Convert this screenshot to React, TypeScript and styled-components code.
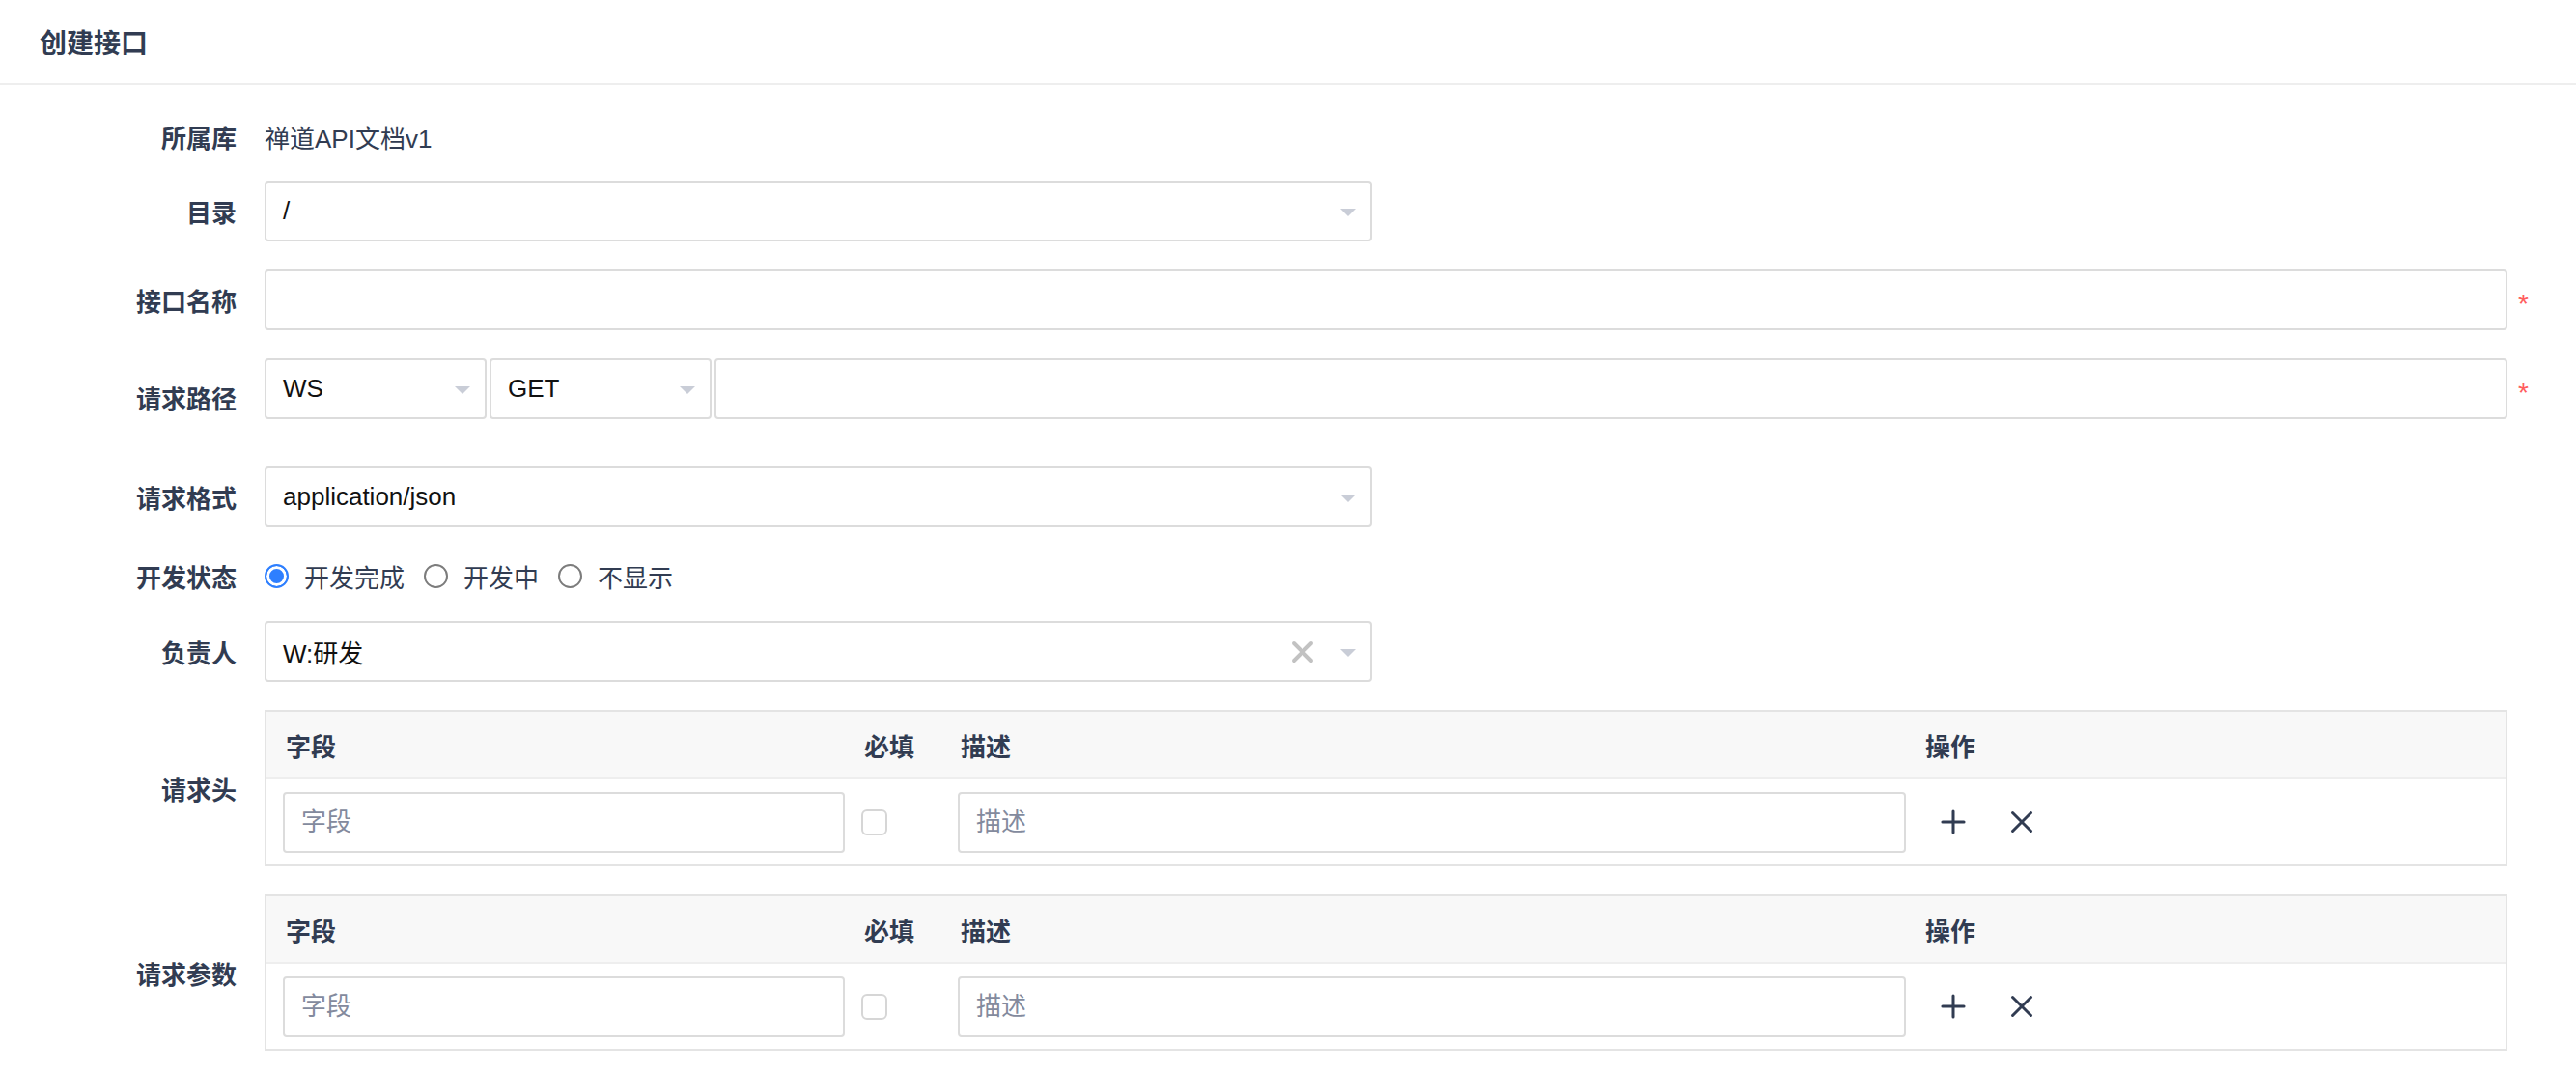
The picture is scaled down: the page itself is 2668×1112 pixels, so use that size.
import styled, { createGlobalStyle } from 'styled-components';
import { Plus, X } from 'lucide-react';

const GlobalStyle = createGlobalStyle`
  * { box-sizing: border-box; }
  body {
    margin: 0;
    background: #fff;
    font-family: "Liberation Sans", "Noto Sans CJK SC", sans-serif;
  }
`;

const Page = styled.div`
  width: 2668px;
  min-height: 1112px;
  background: #fff;
  color: #313c52;
`;

const Header = styled.div`
  height: 88px;
  padding-left: 41px;
  display: flex;
  align-items: center;
  border-bottom: 2px solid #eeeeee;
`;

const Title = styled.h2`
  margin: 0;
  font-size: 28px;
  font-weight: 600;
  color: #313c52;
`;

const Form = styled.div`
  padding-top: 22px;
`;

const Row = styled.div<{ $mt?: number; $h?: number }>`
  display: grid;
  grid-template-columns: 274px 1fr 71px;
  align-items: center;
  min-height: ${p => p.$h ?? 63}px;
  margin-top: ${p => p.$mt ?? 0}px;
`;

const Label = styled.div`
  padding-right: 29px;
  text-align: right;
  font-size: 26px;
  font-weight: 600;
  color: #313c52;
`;

// controls sit at the top of their row; the label stays centred
const Control = styled.div`
  align-self: start;
  display: flex;
  align-items: center;
  gap: 3px;
  min-width: 0;
`;

const StaticValue = styled.div`
  font-size: 26px;
  color: #313c52;
`;

const Required = styled.span`
  align-self: start;
  display: flex;
  align-items: center;
  height: 63px;
  padding-left: 11px;
  padding-top: 8px;
  font-size: 28px;
  line-height: 1;
  color: #ff5d5d;
`;

const SelectBox = styled.div<{ $width?: number }>`
  display: flex;
  align-items: center;
  flex: ${p => (p.$width ? 'none' : '1')};
  width: ${p => (p.$width ? `${p.$width}px` : 'auto')};
  height: 63px;
  padding: 0 15px 0 17px;
  border: 2px solid #dcdcdc;
  border-radius: 4px;
  background: #fff;
  font-size: 26px;
  color: #111;
`;

const SelectValue = styled.span`
  flex: 1;
  white-space: nowrap;
`;

const Caret = styled.span`
  width: 0;
  height: 0;
  border-left: 8px solid transparent;
  border-right: 8px solid transparent;
  border-top: 8px solid #c9cdd7;
  margin-top: 2px;
`;

const ClearIcon = styled(X)`
  margin-right: 21px;
  color: #c2c2c2;
`;

const TextInput = styled.input<{ $width?: number }>`
  flex: ${p => (p.$width ? 'none' : '1')};
  width: ${p => (p.$width ? `${p.$width}px` : 'auto')};
  min-width: 0;
  height: 63px;
  padding: 0 17px;
  border: 2px solid #dcdcdc;
  border-radius: 4px;
  outline: none;
  font-family: inherit;
  font-size: 26px;
  color: #111;
  background: #fff;

  &::placeholder {
    color: #838a9d;
  }
`;

const RadioGroup = styled.div`
  display: flex;
  align-items: center;
`;

const RadioItem = styled.label`
  display: flex;
  align-items: center;
  margin-right: 20px;
  font-size: 26px;
  color: #313c52;
`;

const RadioDot = styled.span<{ $checked?: boolean }>`
  width: 25px;
  height: 25px;
  margin-right: 16px;
  border-radius: 50%;
  border: 2px solid ${p => (p.$checked ? '#2e7fff' : '#7c7c7c')};
  background: ${p => (p.$checked ? '#2e7fff' : '#fff')};
  box-shadow: ${p => (p.$checked ? 'inset 0 0 0 3px #fff' : 'none')};
`;

const ParamTable = styled.div`
  border: 2px solid #e4e4e4;
`;

const TableGrid = styled.div<{ $head?: boolean }>`
  display: grid;
  grid-template-columns: 582px 83px 982px 1fr;
  column-gap: 17px;
  align-items: center;
  padding-left: 17px;
  height: ${p => (p.$head ? 70 : 88)}px;
  background: ${p => (p.$head ? '#f8f8f8' : '#fff')};
  border-bottom: ${p => (p.$head ? '2px solid #eeeeee' : 'none')};
`;

const HeadCell = styled.div`
  padding-left: 3px;
  font-size: 26px;
  font-weight: 600;
  color: #313c52;
`;

const Checkbox = styled.span`
  display: block;
  width: 27px;
  height: 27px;
  border: 2px solid #d6d6d6;
  border-radius: 6px;
  background: #fff;
`;

const Actions = styled.div`
  display: flex;
  align-items: center;
  gap: 33px;
  padding-left: 13px;
`;

const IconButton = styled.button`
  display: flex;
  align-items: center;
  justify-content: center;
  width: 38px;
  height: 38px;
  padding: 0;
  border: none;
  background: transparent;
  color: #313c52;
  cursor: pointer;
`;

function Select({ value, width, clearable }: { value: string; width?: number; clearable?: boolean }) {
  return (
    <SelectBox $width={width}>
      <SelectValue>{value}</SelectValue>
      {clearable && <ClearIcon size={36} strokeWidth={2.6} />}
      <Caret />
    </SelectBox>
  );
}

function FieldTable() {
  return (
    <ParamTable>
      <TableGrid $head>
        <HeadCell>字段</HeadCell>
        <HeadCell>必填</HeadCell>
        <HeadCell>描述</HeadCell>
        <HeadCell>操作</HeadCell>
      </TableGrid>
      <TableGrid>
        <TextInput placeholder="字段" />
        <Checkbox />
        <TextInput placeholder="描述" />
        <Actions>
          <IconButton><Plus size={38} strokeWidth={1.9} /></IconButton>
          <IconButton><X size={38} strokeWidth={1.9} /></IconButton>
        </Actions>
      </TableGrid>
    </ParamTable>
  );
}

const statuses = [
  { text: '开发完成', checked: true },
  { text: '开发中', checked: false },
  { text: '不显示', checked: false },
];

export default function App() {
  return (
    <Page>
      <GlobalStyle />
      <Header>
        <Title>创建接口</Title>
      </Header>
      <Form>
        <Row>
          <Label>所属库</Label>
          <StaticValue>禅道API文档v1</StaticValue>
        </Row>
        <Row $mt={14}>
          <Label>目录</Label>
          <Control>
            <Select value="/" width={1147} />
          </Control>
        </Row>
        <Row $mt={29}>
          <Label>接口名称</Label>
          <Control>
            <TextInput />
          </Control>
          <Required>*</Required>
        </Row>
        <Row $mt={29} $h={80}>
          <Label>请求路径</Label>
          <Control>
            <Select value="WS" width={230} />
            <Select value="GET" width={230} />
            <TextInput />
          </Control>
          <Required>*</Required>
        </Row>
        <Row $mt={32}>
          <Label>请求格式</Label>
          <Control>
            <Select value="application/json" width={1147} />
          </Control>
        </Row>
        <Row $mt={30} $h={40}>
          <Label>开发状态</Label>
          <RadioGroup>
            {statuses.map(s => (
              <RadioItem key={s.text}>
                <RadioDot $checked={s.checked} />
                {s.text}
              </RadioItem>
            ))}
          </RadioGroup>
        </Row>
        <Row $mt={27}>
          <Label>负责人</Label>
          <Control>
            <Select value="W:研发" width={1147} clearable />
          </Control>
        </Row>
        <Row $mt={29}>
          <Label>请求头</Label>
          <FieldTable />
        </Row>
        <Row $mt={29}>
          <Label>请求参数</Label>
          <FieldTable />
        </Row>
      </Form>
    </Page>
  );
}
